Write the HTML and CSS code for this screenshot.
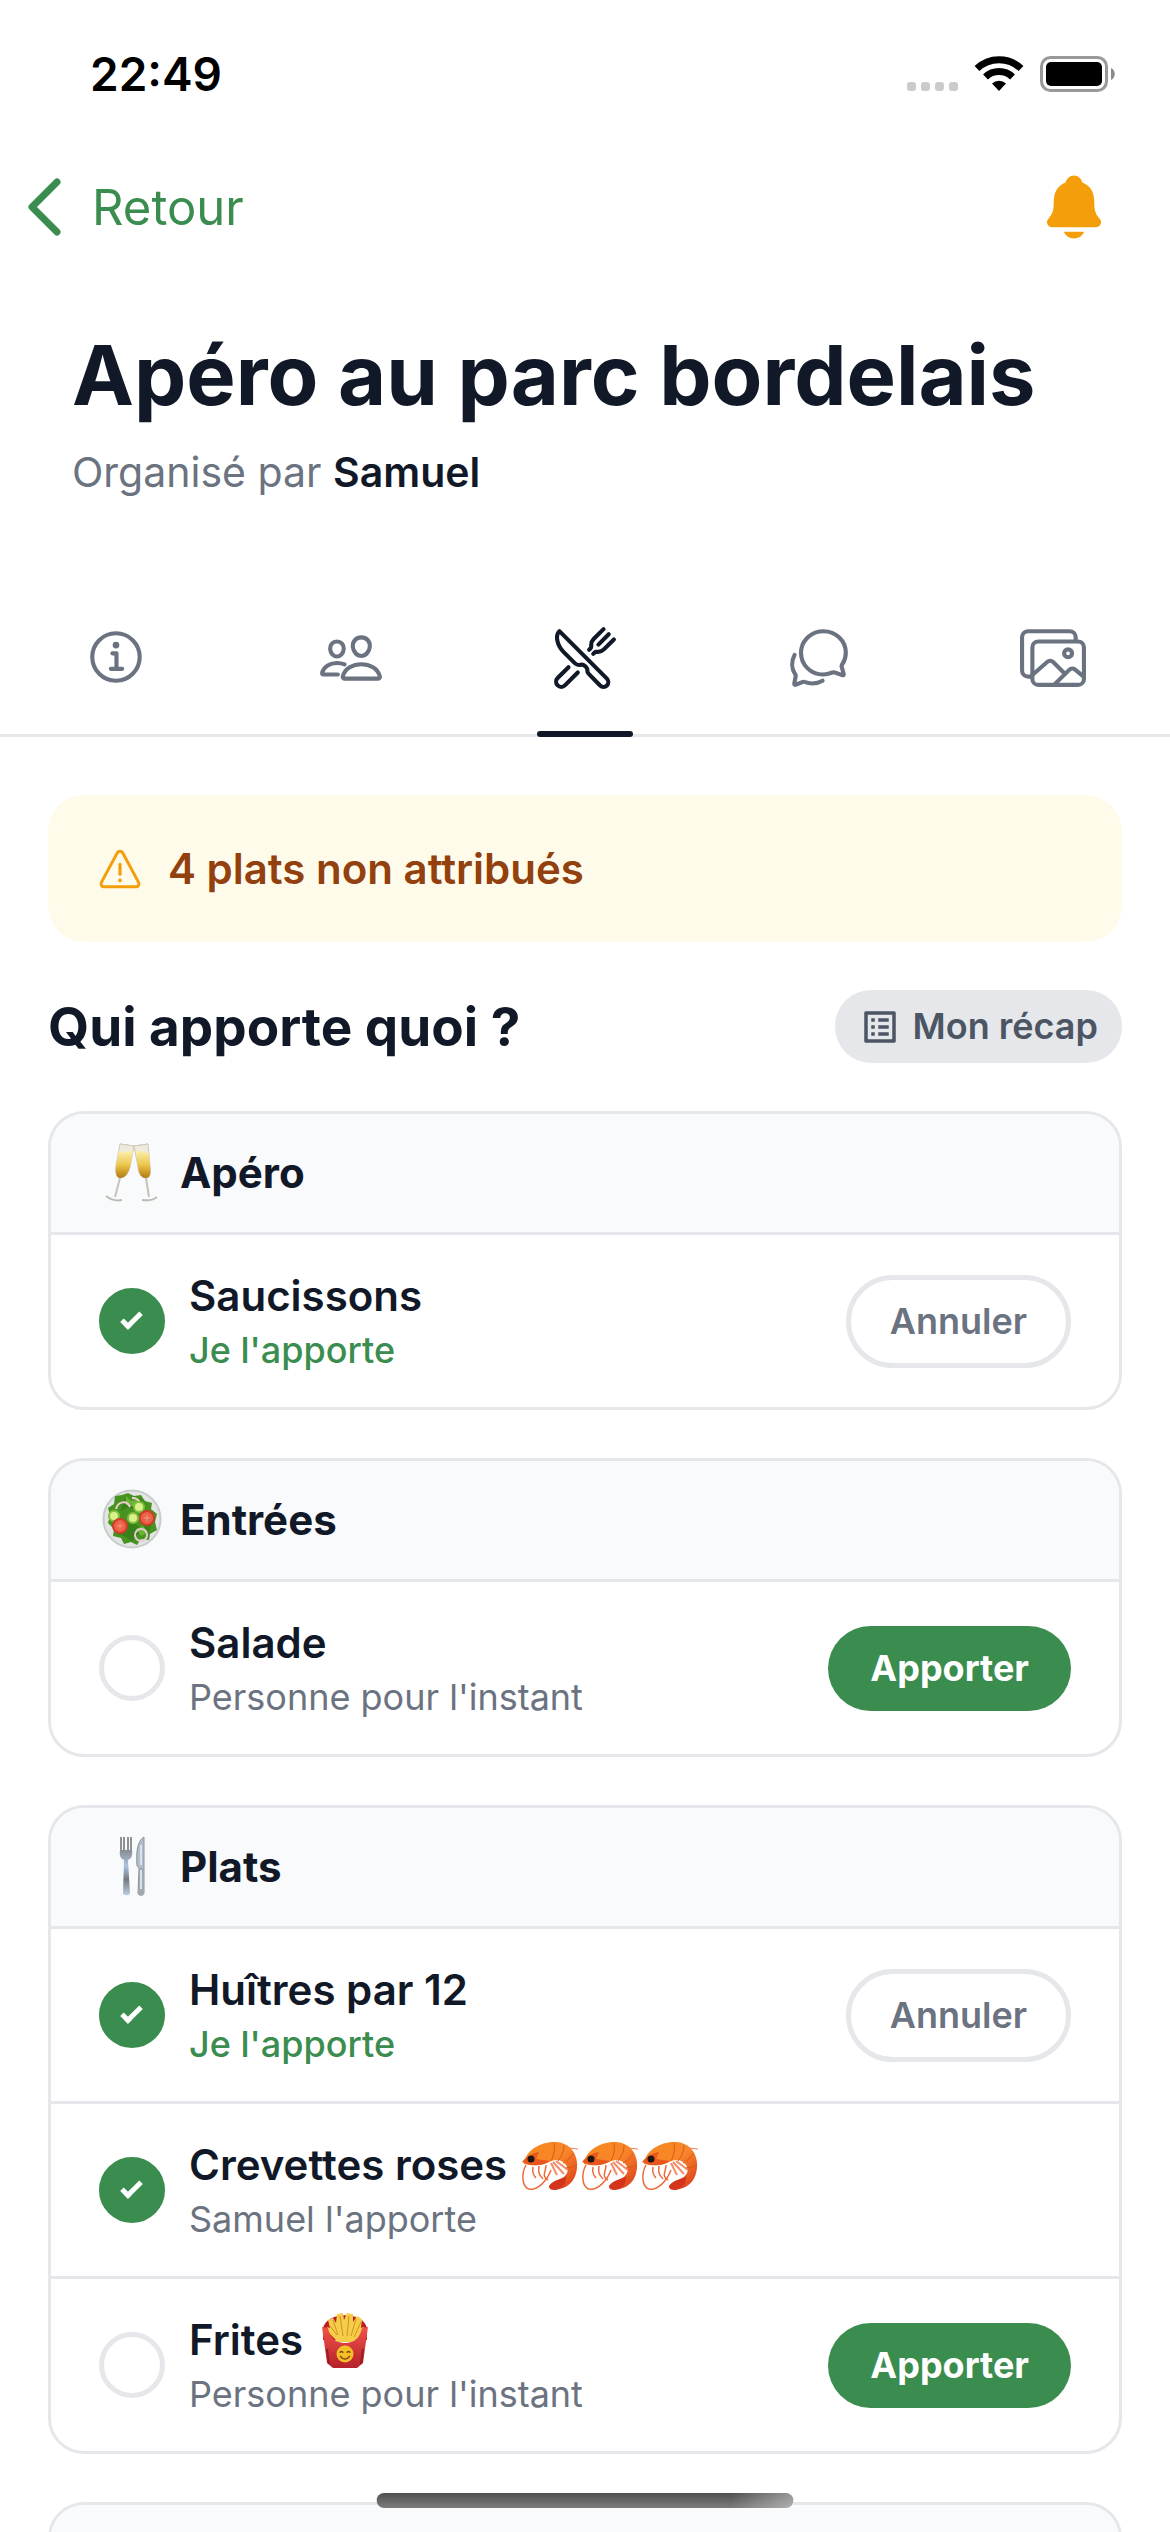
FILE: index.html
```
<!DOCTYPE html>
<html lang="fr">
<head>
    <meta charset="UTF-8">
    <meta name="viewport" content="width=device-width, initial-scale=1.0">
    <title>Apéro au parc bordelais</title>
    <link rel="stylesheet" href="styles.css">
</head>
<body>

    <!-- Shared drawings -->
    <svg class="defs" aria-hidden="true">
        <defs>
            <linearGradient id="shell" x1="0" y1="0" x2="1" y2="1">
                <stop offset="0" stop-color="#f58a1f"/>
                <stop offset="0.5" stop-color="#f9852a"/>
                <stop offset="1" stop-color="#d8341a"/>
            </linearGradient>
            <linearGradient id="wine" x1="0" y1="0" x2="0" y2="1">
                <stop offset="0" stop-color="#fbf0b0"/>
                <stop offset="0.5" stop-color="#ecc94f"/>
                <stop offset="1" stop-color="#b47a0c"/>
            </linearGradient>
            <linearGradient id="box" x1="0" y1="0" x2="0" y2="1">
                <stop offset="0" stop-color="#f0524a"/>
                <stop offset="1" stop-color="#b5222a"/>
            </linearGradient>
            <linearGradient id="steel" x1="0" y1="0" x2="0" y2="1">
                <stop offset="0" stop-color="#8a8c90"/>
                <stop offset="0.35" stop-color="#a9c4e0"/>
                <stop offset="0.65" stop-color="#77797d"/>
                <stop offset="1" stop-color="#b9cfe6"/>
            </linearGradient>
            <symbol id="shrimp" viewBox="0 0 60 60">
                <path d="M7 29C2 38 3 51 10 53c8 2 18-8 22-19M14 31c-1 5 0 8 3 11M20 30c-1 6 0 9 4 13M27 29c0 7-5 11 2 15" fill="none" stroke="#ee6a3c" stroke-width="1.5"/>
                <path d="M34 26l11 12M37 25l12 9M32 27l6 12" stroke="#f08c68" stroke-width="2"/>
                <path d="M5 28C6 14 23 5 37 6c15 1 22 13 21 26-1 10-6 17-14 20-5 2-13 1-14-2 4-5 10-6 15-9 4-4 5-8 2-12-4-6-11-6-17-3-7 4-15 4-25 2z" fill="url(#shell)"/>
                <path d="M3 26c4-5 10-9 17-10l-3 7 14 2c-9 6-20 5-28 1z" fill="#e8571d"/>
                <path d="M30 50c5-7 13-6 17-10 1 8-5 14-11 14-4 0-6-1-6-4z" fill="#d3341b"/>
                <path d="M35 7c1 6 0 12-3 18M45 9c0 7-3 12-6 16M54 18c-4 5-7 8-10 9M57 30l-10 2M53 43l-7-3" stroke="#d95b12" stroke-width="1" fill="none"/>
                <path d="M49 12l10 1" stroke="#f0805a" stroke-width="1"/>
                <circle cx="12" cy="23" r="3.5" fill="#201512"/>
            </symbol>
        </defs>
    </svg>

    <div class="screen">

        <!-- Status bar -->
        <div class="status-bar">
            <span class="time">22:49</span>
            <svg width="209" height="38" viewBox="907 55 209 38" aria-hidden="true">
                <g fill="#cbcbcb">
                    <rect x="907" y="82" width="9" height="9" rx="3"/>
                    <rect x="921" y="82" width="9" height="9" rx="3"/>
                    <rect x="935" y="82" width="9" height="9" rx="3"/>
                    <rect x="949" y="82" width="9" height="9" rx="3"/>
                </g>
                <g fill="none" stroke="#000" stroke-width="7">
                    <path d="M977 68.500a32 32 0 0 1 44 0"/>
                    <path d="M985.500 77a19.500 19.500 0 0 1 27 0"/>
                </g>
                <path d="M999 91l-7-7.500a10 10 0 0 1 14 0z"/>
                <rect x="1041.500" y="57.500" width="65" height="33" rx="9" fill="none" stroke="#999" stroke-width="3"/>
                <rect x="1046" y="62" width="56" height="24" rx="5"/>
                <path d="M1111 68c5 2 5 10 0 12z" fill="#8a8a8a"/>
            </svg>
        </div>

        <!-- Navigation -->
        <nav class="navbar">
            <a href="#" class="back">
                <svg width="40" height="60" viewBox="0 0 40 60" aria-hidden="true">
                    <path d="M33 5L8 30l25 25" fill="none" stroke="currentColor" stroke-width="7" stroke-linecap="round" stroke-linejoin="round"/>
                </svg>
                <span>Retour</span>
            </a>
            <button class="bell" aria-label="Notifications">
                <svg width="72" height="72" viewBox="0 0 512 512" fill="currentColor" aria-hidden="true">
                    <path d="M440.080 341.310c-1.660-2-3.290-4-4.890-5.930-22-26.610-35.310-42.670-35.310-118 0-39-9.330-71-27.720-95-13.560-17.730-31.890-31.180-56.050-41.120a3 3 0 0 1-.820-.670C306.600 51.490 282.820 32 256 32s-50.590 19.490-59.280 48.560a3.130 3.130 0 0 1-.810.650c-56.380 23.210-83.780 67.740-83.780 136.140 0 75.360-13.290 91.420-35.310 118-1.600 1.930-3.230 3.890-4.890 5.930a35.160 35.160 0 0 0-4.650 37.620c6.170 13 19.320 21.070 34.330 21.070H410.500c14.940 0 28-8.060 34.190-21a35.170 35.170 0 0 0-4.610-37.660zM256 480a80.060 80.060 0 0 0 70.440-42.130 4 4 0 0 0-3.540-5.870H189.120a4 4 0 0 0-3.550 5.870A80.060 80.060 0 0 0 256 480z"/>
                </svg>
            </button>
        </nav>

        <header class="event">
            <h1>Apéro au parc bordelais</h1>
            <p>Organisé par <strong>Samuel</strong></p>
        </header>

        <!-- Tabs -->
        <nav class="tabs">
            <a href="#" class="tab" aria-label="Informations">
                <svg class="tab-icon" viewBox="0 0 512 512">
                    <path d="M248 64C146.390 64 64 146.390 64 248s82.390 184 184 184 184-82.390 184-184S349.610 64 248 64z"/>
                    <path d="M220 220h32v116M208 340h88"/>
                    <circle cx="248" cy="156" r="26" fill="currentColor" stroke="none"/>
                </svg>
            </a>
            <a href="#" class="tab" aria-label="Participants">
                <svg class="tab-icon" viewBox="0 0 512 512">
                    <path d="M402 168c-2.930 40.670-33.100 72-66 72s-63.120-31.320-66-72c-3-42.310 26.370-72 66-72s69 30.460 66 72z"/>
                    <path d="M336 304c-65.170 0-127.840 32.370-143.540 95.410-2.080 8.340 3.150 16.590 11.720 16.590h263.650c8.570 0 13.770-8.250 11.720-16.590C463.850 335.360 401.180 304 336 304z"/>
                    <path d="M200 185.940c-2.340 32.480-26.720 58.060-53 58.060s-50.700-25.570-53-58.060C91.610 152.150 115.340 128 147 128s55.390 24.770 53 57.940z"/>
                    <path d="M206 306c-18.050-8.270-37.930-11.450-59-11.450-52 0-102.100 25.850-114.650 76.200-1.650 6.660 2.530 13.250 9.370 13.250H154"/>
                </svg>
            </a>
            <a href="#" class="tab active" aria-label="Repas">
                <svg class="tab-icon" viewBox="0 0 512 512">
                    <path d="M57.490 47.740l368.430 368.430a37.280 37.280 0 0 1 0 52.720 37.290 37.290 0 0 1-52.720 0l-90-91.550a32 32 0 0 1-9.200-22.430v-5.530a32 32 0 0 0-9.520-22.780l-11.620-10.730a32 32 0 0 0-29.800-7.440 48.530 48.530 0 0 1-46.560-12.630l-85.430-85.440C40.390 159.680 21.740 83.150 57.490 47.740z"/>
                    <path d="M400 32l-77.250 77.250A64 64 0 0 0 304 154.510v14.860a16 16 0 0 1-4.690 11.320L288 192M320 224l11.310-11.310a16 16 0 0 1 11.320-4.690h14.860a64 64 0 0 0 45.260-18.750L480 112M440 72l-80 80M200 368l-99.720 100.280a40 40 0 0 1-56.560 0 40 40 0 0 1 0-56.560L128 328"/>
                </svg>
            </a>
            <a href="#" class="tab" aria-label="Discussion">
                <svg class="tab-icon" viewBox="0 0 512 512">
                    <path d="M431 320.600c-1-3.600 1.200-8.600 3.300-12.200a33.680 33.680 0 0 1 2.100-3.100A162 162 0 0 0 464 215c.3-92.200-77.500-167-173.700-167-83.900 0-153.900 57.100-170.300 132.900a160.700 160.700 0 0 0-3.700 34.200c0 92.300 74.800 169.100 171 169.100 15.300 0 35.900-4.600 47.200-7.700s22.500-7.200 25.400-8.300a26.440 26.440 0 0 1 9.300-1.700 26 26 0 0 1 10.100 2l56.700 20.100a13.520 13.520 0 0 0 3.900 1 8 8 0 0 0 8-8 12.850 12.850 0 0 0-.5-2.700z"/>
                    <path d="M66.460 232a146.230 146.230 0 0 0 6.390 152.670c2.310 3.490 3.610 6.190 3.210 8s-11.930 61.870-11.930 61.870a8 8 0 0 0 2.710 7.680A8.170 8.170 0 0 0 72 464a7.260 7.260 0 0 0 2.910-.6l56.210-22a15.700 15.700 0 0 1 12 .2c18.940 7.380 39.880 12 60.830 12A159.210 159.210 0 0 0 284 432.110"/>
                </svg>
            </a>
            <a href="#" class="tab" aria-label="Photos">
                <svg class="tab-icon" viewBox="0 0 512 512">
                    <path d="M432 112V96a48.140 48.140 0 0 0-48-48H64a48.140 48.140 0 0 0-48 48v256a48.140 48.140 0 0 0 48 48h16"/>
                    <rect x="96" y="128" width="400" height="336" rx="46"/>
                    <ellipse cx="373" cy="219.600" rx="30.800" ry="30.500"/>
                    <path d="M342.150 372.170L255 285.780a30.930 30.930 0 0 0-42.180-1.210L96 387.640M265.230 464l118.590-117.730a31 31 0 0 1 41.460-1.870L496 402.910"/>
                </svg>
            </a>
        </nav>

        <main class="content">

            <div class="alert">
                <svg width="48" height="48" viewBox="0 0 512 512" aria-hidden="true">
                    <path d="M85.570 446.250h340.860a32 32 0 0 0 28.170-47.170L284.180 82.580c-12.090-22.440-44.270-22.440-56.360 0L57.400 399.080a32 32 0 0 0 28.170 47.170z" fill="none" stroke="#f59e0b" stroke-width="32"/>
                    <path d="M256 205v106" stroke="#f59e0b" stroke-width="34" stroke-linecap="round"/>
                    <circle cx="256" cy="377" r="20" fill="#f59e0b"/>
                </svg>
                <span>4 plats non attribués</span>
            </div>

            <div class="section-title">
                <h2>Qui apporte quoi ?</h2>
                <button class="recap">
                    <svg width="42" height="42" viewBox="0 0 24 24" fill="currentColor" aria-hidden="true">
                        <path d="M19 5v14H5V5h14m1.100-2H3.900c-.5 0-.9.400-.9.900v16.200c0 .4.400.9.900.9h16.200c.4 0 .9-.5.900-.9V3.900c0-.5-.5-.9-.9-.9zM11 7h6v2h-6V7zm0 4h6v2h-6v-2zm0 4h6v2h-6zM7 7h2v2H7zm0 4h2v2H7zm0 4h2v2H7z"/>
                    </svg>
                    Mon récap
                </button>
            </div>

            <section class="card">
                <div class="card-header">
                    <svg class="emoji" viewBox="0 0 60 60" aria-hidden="true">
                        <path d="M18 2l14 2M46 2L32 4" stroke="#c9c5bd" fill="none"/>
                        <path d="M18 2l-4 22c-1 8 1 12 4 12 5 0 8-4 10-11l4-21z" fill="#eeeade" stroke="#cfc9b8" stroke-width="1"/>
                        <path d="M46 2l2 22c1 8 0 12-4 12-5 0-7-4-8-11L32 4z" fill="#eeeade" stroke="#cfc9b8" stroke-width="1"/>
                        <path d="M17 9l-3 15c-1 8 1 12 4 12 5 0 8-4 10-11l3-15c-5-3-9 2-14-1z" fill="url(#wine)"/>
                        <path d="M47 11l1 13c1 8 0 12-4 12-5 0-7-4-8-11L34 9c5-2 9 3 13 2z" fill="url(#wine)"/>
                        <path d="M18 36l-5 19M44 36l3 19" stroke="#c5c2ba" stroke-width="2"/>
                        <path d="M4 54c5 4 11 5 16 4M40 58c6 1 11 0 15-3" stroke="#bdbab4" stroke-width="2" fill="none"/>
                    </svg>
                    <h3>Apéro</h3>
                </div>
                <div class="dish">
                    <input type="checkbox" id="saucissons" checked>
                    <div class="dish-text">
                        <label for="saucissons">Saucissons</label>
                        <span class="mine">Je l'apporte</span>
                    </div>
                    <button class="btn cancel">Annuler</button>
                </div>
            </section>

            <section class="card">
                <div class="card-header">
                    <svg class="emoji" viewBox="0 0 60 60" aria-hidden="true">
                        <circle cx="30" cy="30" r="28.500" fill="#e2e5e4" stroke="#c8cccb" stroke-width="2"/>
                        <path d="M20 6l6-2 6 3 7-1 4 6 7 2-1 6 6 5-2 8 2 8-7 4-1 6-8-1-4 6-6-3-7 2-3-6-8-2 1-7-6-6 2-8-2-7 6-4 1-8z" fill="#479320"/>
                        <path d="M22 10l8 3 9-4 3 8-8 4-8-3-7 4zM12 33l9 4 9-6 8 8 12-5-4 10-10 1-6 7-8-5-7-2z" fill="#397f1b"/>
                        <path d="M24 7l5 5 8-2-3 8-10-2zM34 40l7-3 5 6-7 4z" fill="#6cb436"/>
                        <path d="M14 20c2-8 11-9 14-2M30 9c4 0 7 2 8 5" stroke="#eed0d3" stroke-width="2" fill="none"/>
                        <circle cx="39" cy="46" r="6" fill="none" stroke="#e6cbd0" stroke-width="2"/>
                        <g fill="#d8f28b" stroke="#83bf3d" stroke-width="2">
                            <circle cx="12" cy="27" r="5"/>
                            <circle cx="31" cy="29" r="5"/>
                            <circle cx="37" cy="18" r="5"/>
                        </g>
                        <g fill="#ea6349" stroke="#cf3c29" stroke-width="2">
                            <circle cx="18" cy="37" r="7"/>
                            <circle cx="45" cy="29" r="7"/>
                        </g>
                        <path d="M18 34v6M15 37h6M45 26v6M42 29h6" stroke="#f29a7e" stroke-width="1"/>
                    </svg>
                    <h3>Entrées</h3>
                </div>
                <div class="dish">
                    <input type="checkbox" id="salade">
                    <div class="dish-text">
                        <label for="salade">Salade</label>
                        <span>Personne pour l'instant</span>
                    </div>
                    <button class="btn bring">Apporter</button>
                </div>
            </section>

            <section class="card">
                <div class="card-header">
                    <svg class="emoji" viewBox="0 0 60 60" aria-hidden="true">
                        <path d="M19 1v14M22 1v14M26 1v14M29 1v14" stroke="#8f9194" stroke-width="2"/>
                        <path d="M18 14h12c1 6-1 9-4 10l2 33c0 3-7 3-7 0l1-33c-3-1-5-4-4-10z" fill="url(#steel)"/>
                        <path d="M42 1c-7 4-8 16-7 29l2 2-1 25c0 3 6 3 6 0z" fill="#b3bdc7" stroke="#8b949d" stroke-width="1"/>
                        <path d="M37 32h5v25c0 2-5 2-5 0z" fill="#a3a8ae"/>
                        <path d="M39 9v20M39 34v19" stroke="#d5e3f0" stroke-width="2"/>
                    </svg>
                    <h3>Plats</h3>
                </div>
                <div class="dish">
                    <input type="checkbox" id="huitres" checked>
                    <div class="dish-text">
                        <label for="huitres">Huîtres par 12</label>
                        <span class="mine">Je l'apporte</span>
                    </div>
                    <button class="btn cancel">Annuler</button>
                </div>
                <div class="dish">
                    <input type="checkbox" id="crevettes" checked>
                    <div class="dish-text">
                        <label for="crevettes">Crevettes roses
                            <span class="emojis">
                                <svg class="emoji"><use href="#shrimp"/></svg>
                                <svg class="emoji"><use href="#shrimp"/></svg>
                                <svg class="emoji"><use href="#shrimp"/></svg>
                            </span>
                        </label>
                        <span>Samuel l'apporte</span>
                    </div>
                </div>
                <div class="dish">
                    <input type="checkbox" id="frites">
                    <div class="dish-text">
                        <label for="frites">Frites
                            <span class="emojis">
                                <svg class="emoji" viewBox="0 0 60 60">
                                    <path d="M8 17C12 0 48 0 52 17v12H8z" fill="#bd1c22"/>
                                    <path d="M13 9l5-2 3 5 1-9 6-1 1 7 3-7 6 1v8l4-6 5 3-1 9 3-1-3 10-9 5H23L13 21l-1-5 3 1z" fill="#f5cd49"/>
                                    <path d="M18 9l5 15M25 5l3 20M34 5l-2 20M41 8l-5 17M46 11l-7 15M15 15l7 9" stroke="#cf9520" stroke-width="1" fill="none"/>
                                    <path d="M7 16l6 1c2 10 8 15 17 15s15-5 17-15l6-1-5 36-6 5H18l-6-5z" fill="url(#box)"/>
                                    <path d="M12 38l2 15M48 38l-2 15" stroke="#951c23" stroke-width="2"/>
                                    <circle cx="30" cy="43" r="8.500" fill="#f6bf26"/>
                                    <path d="M25 42c0-2 3-2 3 0M32 42c0-2 3-2 3 0M25 45c3 4 7 4 10 0" stroke="#7a4b12" stroke-width="1.300" fill="none"/>
                                </svg>
                            </span>
                        </label>
                        <span>Personne pour l'instant</span>
                    </div>
                    <button class="btn bring">Apporter</button>
                </div>
            </section>

            <section class="card">
                <div class="card-header"></div>
            </section>

        </main>
    </div>

    <div class="home-indicator"></div>

</body>
</html>
```

FILE: styles.css
```
/* General Styles */
* {
    box-sizing: border-box;
}

body {
    font-family: Inter, 'Liberation Sans', sans-serif;
    margin: 0;
    background: #fff;
    color: #111827;
}

h1, h2, h3, p {
    margin: 0;
}

a {
    text-decoration: none;
}

button {
    font-family: inherit;
    border: none;
    cursor: pointer;
}

svg {
    flex-shrink: 0;
}

.defs {
    position: absolute;
    width: 0;
    height: 0;
}

.screen {
    height: 100vh;
    overflow: hidden;
}

/* Status Bar */
.status-bar {
    display: flex;
    align-items: center;
    justify-content: space-between;
    height: 141px;
    padding: 6px 54px 0 90px;
    color: #000;
}

.time {
    font-size: 46px;
    font-weight: 600;
}

/* Navigation */
.navbar {
    display: flex;
    align-items: center;
    justify-content: space-between;
    height: 132px;
    padding: 0 60px 0 24px;
}

.back {
    display: flex;
    align-items: center;
    gap: 28px;
    font-size: 49px;
    color: #3a8d4f;
}

.bell {
    display: flex;
    padding: 0;
    background: none;
    color: #f59e0b;
}

/* Event Header */
.event {
    padding: 48px 72px 80px;
}

.event h1 {
    font-size: 83px;
    line-height: 108px;
    font-weight: 700;
}

.event p {
    margin-top: 16px;
    font-size: 41px;
    line-height: 54px;
    color: #6b7280;
}

.event strong {
    font-weight: 600;
    color: #111827;
}

/* Tabs */
.tabs {
    display: flex;
    border-bottom: 3px solid #e5e7eb;
}

.tab {
    position: relative;
    flex: 1;
    display: flex;
    justify-content: center;
    padding: 46px 0 43px;
    color: #6b7280;
}

.tab.active {
    color: #111827;
}

.tab.active::after {
    content: "";
    position: absolute;
    left: 50%;
    bottom: -3px;
    width: 96px;
    height: 6px;
    margin-left: -48px;
    border-radius: 3px;
    background: #111827;
}

.tab-icon {
    width: 66px;
    height: 66px;
    fill: none;
    stroke: currentColor;
    stroke-width: 32px;
    stroke-linecap: round;
    stroke-linejoin: round;
}

/* Content */
.content {
    display: flex;
    flex-direction: column;
    gap: 48px;
    padding: 58px 48px 0;
}

.alert {
    display: flex;
    align-items: center;
    gap: 24px;
    padding: 48px;
    border-radius: 36px;
    background: #fffbeb;
    color: #92400e;
    font-size: 42px;
    line-height: 51px;
    font-weight: 600;
}

.section-title {
    display: flex;
    align-items: center;
    justify-content: space-between;
}

.section-title h2 {
    font-size: 53px;
    line-height: 72px;
    font-weight: 700;
}

.recap {
    display: flex;
    align-items: center;
    gap: 12px;
    padding: 12px 24px;
    border-radius: 36px;
    background: #e5e7eb;
    color: #4b5563;
    font-size: 36px;
    line-height: 49px;
    font-weight: 600;
}

/* Cards */
.card {
    border: 3px solid #e5e7eb;
    border-radius: 36px;
    overflow: hidden;
}

.card-header {
    display: flex;
    align-items: center;
    gap: 18px;
    min-height: 118px;
    padding: 0 48px 2px 51px;
    background: #f9fafb;
}

.card-header h3 {
    font-size: 42px;
    font-weight: 700;
}

.emoji {
    width: 60px;
    height: 60px;
}

.dish {
    display: flex;
    align-items: center;
    gap: 24px;
    padding: 32px 48px;
    border-top: 3px solid #e5e7eb;
}

.dish input {
    appearance: none;
    display: flex;
    align-items: center;
    justify-content: center;
    width: 66px;
    height: 66px;
    margin: 0;
    border: 5px solid #e5e7eb;
    border-radius: 50%;
    background: #fff;
}

.dish input:checked {
    border-color: #3a8d4f;
    background: #3a8d4f;
}

/* Tick mark */
.dish input:checked::after {
    content: "";
    width: 6px;
    height: 16px;
    margin: 0 2px 6px 0;
    border: solid #fff;
    border-width: 0 5px 5px 0;
    transform: rotate(45deg);
}

.dish-text {
    flex: 1;
    display: flex;
    flex-direction: column;
    font-size: 36px;
    line-height: 50px;
    color: #6b7280;
}

.dish-text label {
    display: flex;
    align-items: center;
    gap: 12px;
    font-size: 42px;
    line-height: 58px;
    font-weight: 600;
    color: #111827;
}

.dish-text .mine {
    font-weight: 500;
    color: #3a8d4f;
}

.emojis {
    display: flex;
    height: 58px;
}

/* Buttons */
.btn {
    padding: 20px 42px;
    border-radius: 48px;
    font-size: 36px;
    line-height: 45px;
    font-weight: 600;
}

.bring {
    background: #3a8d4f;
    color: #fff;
    font-weight: 700;
}

.cancel {
    padding: 19px 39px;
    border: 5px solid #e5e7eb;
    background: #fff;
    color: #6b7280;
}

/* Home Indicator */
.home-indicator {
    position: fixed;
    left: 50%;
    bottom: 24px;
    width: 417px;
    height: 15px;
    transform: translateX(-50%);
    border-radius: 8px;
    background: linear-gradient(90deg, transparent 85%, rgba(255, 255, 255, 0.4)), linear-gradient(#505050, #7c7c7c);
}
```
